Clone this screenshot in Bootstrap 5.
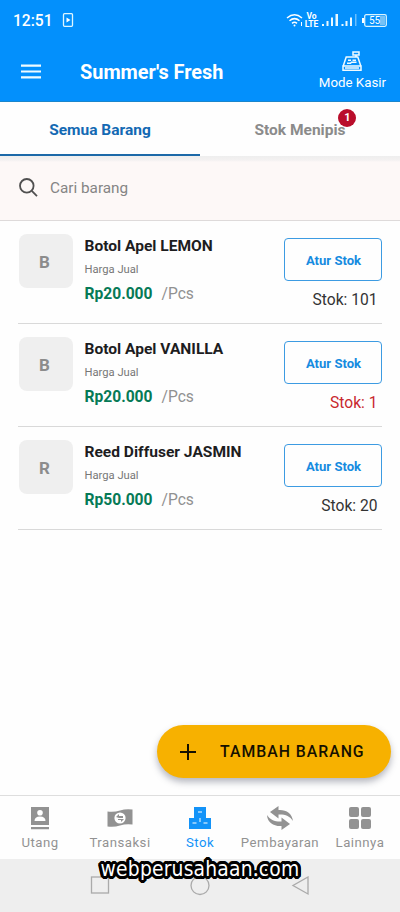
<!DOCTYPE html>
<html lang="id">
<head>
<meta charset="utf-8">
<meta name="viewport" content="width=device-width, initial-scale=1">
<title>Summer's Fresh</title>
<link href="https://cdn.jsdelivr.net/npm/bootstrap@5.3.0/dist/css/bootstrap.min.css" rel="stylesheet">
<style>
body{font-family:Roboto,"Noto Sans",sans-serif;color:#202124;background:#fefefe;line-height:1.2;overflow:hidden}
svg{display:block;flex:none}
.screen{width:400px;height:912px}
.status-bar{height:40px;padding:0 13px 0 13px;background:#0390fc;color:#fff;font-size:15.6px}
.clock{font-weight:500;padding-top:2px}
.volte{font-size:8.5px;font-weight:700;width:15px;margin-right:-1px}
.volte span{display:block;height:8px;line-height:8px}
.app-bar{height:62px;padding:0 14px 0 21px;background:#0390fc;color:#fff;border-bottom:1px solid #1a86cc}
.menu-icon{margin-top:2px}
.store-name{font-size:19.9px;margin-left:39px;padding-top:4px}
.kasir{font-size:13.3px;line-height:16px;padding-top:11px}
.tabs{height:54px;font-size:15.5px}
.tab-item{color:#8b8b8b;padding-top:2px}
.tab-item.current{color:#1369b3;border-bottom:2px solid #1c69a8;padding-top:4px}
.alert-dot{width:18px;height:18px;background:#b90d2b;color:#fff;font-size:11px;right:-11px;top:-12px}
.search{height:65px;padding:0 20px 0 19px;background:linear-gradient(#eeeeee 0,#f3f1f1 4px,#fdf8f7 6px);border-bottom:1px solid #dedada;font-size:15.3px;color:#858585}
.search svg{margin-top:-2px}
.products{padding:0 18px}
.product{height:103px;border-bottom:1px solid #d9d9d9;padding-top:13px}
.thumb{width:54px;height:54px;border-radius:8px;background:#efefef;color:#8c8c8c;font-size:17px;padding-right:3px;padding-top:2px;margin-left:1px}
.info{margin-left:11.5px;padding-top:3px}
.name{font-size:15.55px;line-height:19px;color:#1d1d1f}
.label{font-size:11.2px;line-height:14px;color:#777;margin-top:7px}
.price{font-size:15.6px;line-height:19px;margin-top:8px;color:#067a56}
.unit{color:#919191;margin-left:9px}
.btn-stock{--bs-btn-color:#168be0;--bs-btn-border-color:#3d9be2;width:98px;height:43px;padding:2px 0 0 1px;margin-top:4px;font-size:13.1px;border-radius:4px;font-weight:700}
.count{font-size:15.6px;line-height:19px;margin-top:10px;margin-right:4.5px;color:#333}
.low{color:#c8282e}
.add-btn,.add-btn:hover{right:9px;top:725px;width:234px;height:53px;background:#f7b100;color:#151000;border:0;box-shadow:0 4px 7px rgba(70,75,95,.4);font-size:15.8px;font-weight:500;letter-spacing:1px;padding:1px 0 0 23px}
.bottom-nav{height:64px;border-top:1px solid #dedede;background:#fefefe;color:#929292;font-size:13.2px;letter-spacing:.5px}
.nav-cell{width:80px;padding-top:9px}
.nav-cell svg{margin-bottom:4px}
.nav-cell.on{color:#1393f8}
.system-nav{height:53px;background:#eeeeee;padding-left:90px}
.watermark{left:0;right:0;top:857px;font:20.8px/24px "DejaVu Sans Condensed","DejaVu Sans",sans-serif;font-stretch:condensed;letter-spacing:.2px;color:#fff;text-shadow:3px 0 #000,-3px 0 #000,0 3px #000,0 -3px #000,2px 2px #000,-2px 2px #000,2px -2px #000,-2px -2px #000,3px 1px #000,-3px 1px #000,3px -1px #000,-3px -1px #000,1px 3px #000,-1px 3px #000,1px -3px #000,-1px -3px #000,0 0 2px #000}
</style>
<script src="https://cdn.jsdelivr.net/npm/bootstrap@5.3.0/dist/js/bootstrap.bundle.min.js"></script>
</head>
<body>
<div class="screen position-relative d-flex flex-column">
  <div class="status-bar d-flex align-items-center">
    <span class="clock">12:51</span>
    <svg class="ms-2" width="14" height="16" viewBox="0 0 14 16" fill="none" stroke="#dff6ff" stroke-width="1.3"><rect x="2.500" y="1.700" width="9" height="12.600" rx="1"/><path d="M5.500 5.500l4 2.500-4 2.500z" fill="#fff" stroke="none"/></svg>
    <div class="ms-auto d-flex align-items-center">
      <svg width="18" height="15" viewBox="0 0 18 15" fill="none" stroke="#fff" stroke-width="1.500"><path d="M1 5Q8.500-1.500 16 5M3.500 7.700Q8.500 3.500 13.500 7.700M6 10.300Q8.500 8.300 11 10.300"/><circle cx="8.500" cy="12.500" r="1" fill="#fff" stroke="none"/><path d="M15.500 9v4" stroke-width="1"/></svg>
      <div class="volte text-center"><span>Vo</span><span>LTE</span></div>
      <svg class="ms-1" width="36" height="14" viewBox="0 0 36 14" fill="#e9f8ff"><path d="M0 11h2v2H0zM4.500 8h2v5h-2zM9 4.500h2V13H9zM13.500 1H16v12h-2.500zM19.500 11h2v2h-2zM23.500 8h2v5h-2zM28 4.500h2V13h-2z"/><path d="M33 1h1.500v12H33z" opacity=".45"/></svg>
      <svg class="ms-1" width="25" height="13" viewBox="0 0 25 13"><rect x="2.700" y=".7" width="21.600" height="11.600" rx="1.500" fill="none" stroke="#d8f3ff" stroke-width="1.300"/><path d="M0 4h2v5H0z" fill="#fff"/><path d="M18 2h5v9h-5z" fill="#75c1f5"/><text x="7" y="10" font-size="10" fill="#fff">55</text></svg>
    </div>
  </div>
  <header class="app-bar d-flex align-items-center">
    <svg class="menu-icon" width="20" height="15" viewBox="0 0 20 15" fill="#effbff"><path d="M0 .500h20v2.200H0zM0 6.400h20v2.200H0zM0 12.300h20v2.200H0z"/></svg>
    <div class="store-name fw-bold">Summer's Fresh</div>
    <div class="kasir ms-auto d-flex flex-column align-items-center align-self-start">
      <svg class="mb-1" width="20" height="20" viewBox="0 0 20 20" fill="none" stroke="#f1fbff" stroke-width="1.500"><path d="M11 1h6v3h-6zM14 4v2.500M4.200 6h11.600l3 9H1.200zM1 15h18v4.200H1zM6 9.300h3m1.500 0H14M5 12.300h3.500l1-1h5M3 17h14"/></svg>
      <span>Mode Kasir</span>
    </div>
  </header>
  <div class="tabs d-flex fw-bold text-center">
    <div class="tab-item current w-50 d-flex align-items-center justify-content-center">Semua Barang</div>
    <div class="tab-item w-50 d-flex align-items-center justify-content-center"><span class="position-relative">Stok Menipis<span class="alert-dot position-absolute rounded-circle d-flex align-items-center justify-content-center">1</span></span></div>
  </div>
  <div class="search d-flex align-items-center">
    <svg width="19" height="19" viewBox="0 0 19 19" fill="none" stroke="#505050" stroke-width="1.800"><circle cx="7.800" cy="7.800" r="6.800"/><path d="M12.800 12.800l5.200 5.400"/></svg>
    <span class="ms-2 ps-1">Cari barang</span>
  </div>
  <main class="products flex-grow-1">
    <div class="product d-flex">
      <div class="thumb d-flex align-items-center justify-content-center fw-bold">B</div>
      <div class="info"><div class="name fw-bold">Botol Apel LEMON</div><div class="label">Harga Jual</div><div class="price"><b>Rp20.000</b><span class="unit">/Pcs</span></div></div>
      <div class="ms-auto d-flex flex-column align-items-end"><button class="btn btn-stock">Atur Stok</button><div class="count">Stok: 101</div></div>
    </div>
    <div class="product d-flex">
      <div class="thumb d-flex align-items-center justify-content-center fw-bold">B</div>
      <div class="info"><div class="name fw-bold">Botol Apel VANILLA</div><div class="label">Harga Jual</div><div class="price"><b>Rp20.000</b><span class="unit">/Pcs</span></div></div>
      <div class="ms-auto d-flex flex-column align-items-end"><button class="btn btn-stock">Atur Stok</button><div class="count low">Stok: 1</div></div>
    </div>
    <div class="product d-flex">
      <div class="thumb d-flex align-items-center justify-content-center fw-bold">R</div>
      <div class="info"><div class="name fw-bold">Reed Diffuser JASMIN</div><div class="label">Harga Jual</div><div class="price"><b>Rp50.000</b><span class="unit">/Pcs</span></div></div>
      <div class="ms-auto d-flex flex-column align-items-end"><button class="btn btn-stock">Atur Stok</button><div class="count">Stok: 20</div></div>
    </div>
  </main>
  <button class="add-btn btn rounded-pill position-absolute d-flex align-items-center">
    <svg class="me-4" width="16" height="16" viewBox="0 0 16 16" stroke="#151000" stroke-width="2"><path d="M8 0v16M0 8h16"/></svg><span>TAMBAH BARANG</span>
  </button>
  <nav class="bottom-nav d-flex">
    <div class="nav-cell d-flex flex-column align-items-center"><svg width="24" height="26" viewBox="0 0 24 26" fill="currentColor"><path d="M3 2h18v18H3zM3 22h18v2.200H3z"/><circle cx="12" cy="7.800" r="2.800" fill="#fff"/><path d="M6.500 16q0-4.500 5.500-4.500t5.500 4.500z" fill="#fff"/></svg>Utang</div>
    <div class="nav-cell d-flex flex-column align-items-center"><svg width="26" height="26" viewBox="0 0 26 26" fill="currentColor"><path d="M.500 6.500Q7 7.500 13 5.500T25.500 4.500v15Q19 18.500 13 20.500T.500 21.500z"/><circle cx="13" cy="13" r="5.600" fill="#fff"/><path d="M9 12l3-3v2h4v2h-4zM17 14l-3 3v-2h-3v-1z"/></svg>Transaksi</div>
    <div class="nav-cell on d-flex flex-column align-items-center"><svg width="24" height="26" viewBox="0 0 24 26" fill="currentColor"><path d="M6 2h12v11h5v11H1V13h5z"/><path d="M10 7h4M4.500 18h4M15.500 18h4M12 13v4" stroke="#fff" stroke-width="1"/></svg>Stok</div>
    <div class="nav-cell d-flex flex-column align-items-center"><svg width="28" height="26" viewBox="0 0 28 26" fill="currentColor"><path d="M4 7l8.500-6v4C20 4.500 26 8 27 16c-3-5-8-6.800-14.500-6.500v4zM24 19l-8.500 6v-4C8 21.500 1.500 18 1 10c3 5 8 6.800 14.500 6.500v-4z"/></svg>Pembayaran</div>
    <div class="nav-cell d-flex flex-column align-items-center"><svg width="24" height="26" viewBox="0 0 24 26" fill="currentColor"><rect x="1" y="2" width="10" height="10" rx="2"/><rect x="13" y="2" width="10" height="10" rx="2"/><rect x="1" y="14" width="10" height="10" rx="2"/><rect x="13" y="14" width="10" height="10" rx="2"/></svg>Lainnya</div>
  </nav>
  <div class="system-nav d-flex align-items-center">
    <svg width="220" height="20" viewBox="0 0 220 20" fill="none" stroke="#aaa" stroke-width="1.300"><rect x="1.500" y="1" width="17" height="16"/><circle cx="110" cy="9.500" r="9"/><path d="M218 1v17L203 9.500z"/></svg>
  </div>
  <div class="watermark position-absolute text-center">webperusahaan.com</div>
</div>
</body>
</html>
